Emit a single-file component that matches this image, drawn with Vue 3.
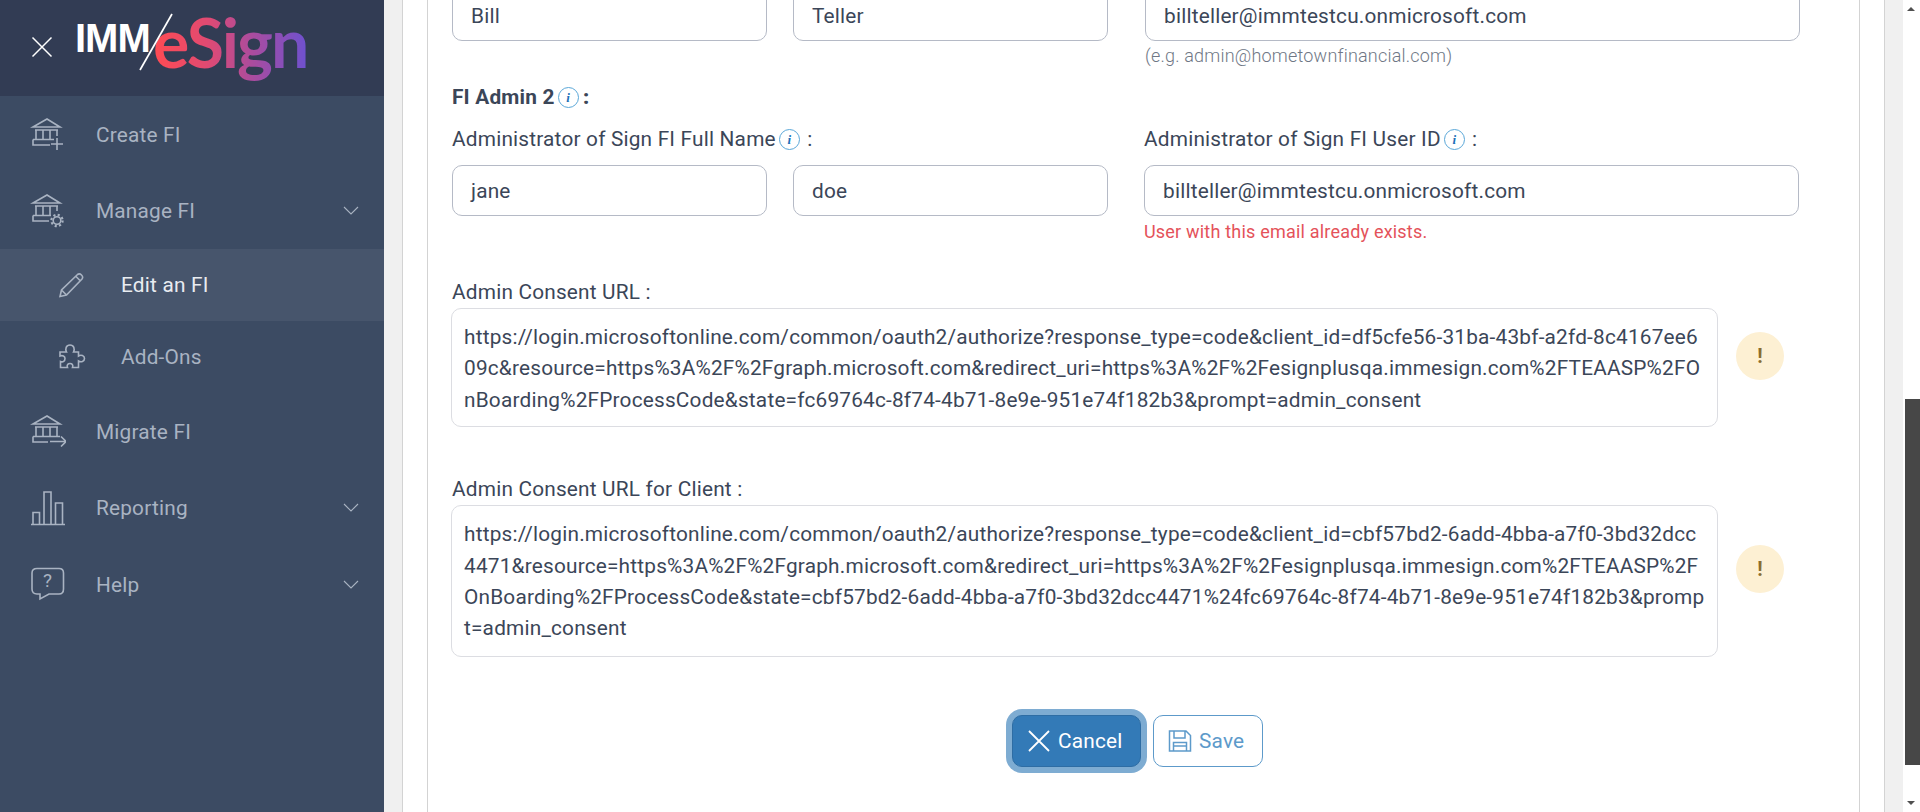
<script setup>
const menu = [
  { label: 'Create FI', icon: 'create', h: 77 },
  { label: 'Manage FI', icon: 'manage', arrow: true, h: 76 },
  { label: 'Edit an FI', icon: 'pencil', sub: true, active: true, h: 72 },
  { label: 'Add-Ons', icon: 'puzzle', sub: true, h: 72 },
  { label: 'Migrate FI', icon: 'migrate', h: 77 },
  { label: 'Reporting', icon: 'chart', arrow: true, h: 76 },
  { label: 'Help', icon: 'help', arrow: true, h: 77 },
]
const url1 = 'https://login.microsoftonline.com/common/oauth2/authorize?response_type=code&client_id=df5cfe56-31ba-43bf-a2fd-8c4167ee6 09c&resource=https%3A%2F%2Fgraph.microsoft.com&redirect_uri=https%3A%2F%2Fesignplusqa.immesign.com%2FTEAASP%2FO nBoarding%2FProcessCode&state=fc69764c-8f74-4b71-8e9e-951e74f182b3&prompt=admin_consent'.split(' ')
const url2 = 'https://login.microsoftonline.com/common/oauth2/authorize?response_type=code&client_id=cbf57bd2-6add-4bba-a7f0-3bd32dcc 4471&resource=https%3A%2F%2Fgraph.microsoft.com&redirect_uri=https%3A%2F%2Fesignplusqa.immesign.com%2FTEAASP%2F OnBoarding%2FProcessCode&state=cbf57bd2-6add-4bba-a7f0-3bd32dcc4471%24fc69764c-8f74-4b71-8e9e-951e74f182b3&promp t=admin_consent'.split(' ')
</script>

<template>
  <div class="page">
    <aside class="sidebar">
      <div class="brand">
        <svg class="close" viewBox="0 0 22 22" width="22" height="22">
          <path d="M1.5 1.5 L20.5 20.5 M20.5 1.5 L1.5 20.5" stroke="#fff" stroke-width="1.5" fill="none" />
        </svg>
        <div class="logo">
          <span class="imm">IMM</span>
          <span class="esign">eSign</span>
          <svg class="slash" viewBox="0 0 36 58" width="36" height="58">
            <path d="M34 1 L2 57" stroke="#fff" stroke-width="1.7" />
          </svg>
        </div>
      </div>
      <nav>
        <div v-for="item in menu" :key="item.label" class="item" :class="{ sub: item.sub, active: item.active }" :style="{ height: item.h + 'px' }">
          <span class="icon">
            <svg v-if="item.icon === 'create'" viewBox="0 0 36 36" width="36" height="36" class="ico">
              <path d="M3 10 L17 2 L30 10 Z M5 13 H28 M6 13 V22 M13 13 V22 M20 13 V22 M27 13 V19 M3 22.5 H24 M3 22.5 V28 H20" />
              <path d="M27 21 V33 M21 27 H33" />
            </svg>
            <svg v-else-if="item.icon === 'manage'" viewBox="0 0 36 36" width="36" height="36" class="ico">
              <path d="M3 10 L17 2 L30 10 Z M5 13 H28 M6 13 V22 M13 13 V22 M20 13 V22 M27 13 V18 M3 22.5 H21 M3 22.5 V28 H19" />
              <circle cx="27" cy="27.5" r="3.8" />
              <circle cx="27" cy="27.5" r="5.6" class="teeth" />
            </svg>
            <svg v-else-if="item.icon === 'pencil'" viewBox="0 0 26 26" width="26" height="26" class="ico">
              <path d="M2 24.5 L3.5 18 L19.5 2.5 Q21.5 1 23.5 3 Q25.5 5 24 7 L8.5 23 Z M3.5 18 L8.5 23 M18 4.5 L22.5 9" />
            </svg>
            <svg v-else-if="item.icon === 'puzzle'" viewBox="0 0 28 28" width="28" height="28" class="ico">
              <path d="M2 9 H8.5 C7 6 8 2 12 2 C16 2 17 6 15.5 9 H20.5 V13 C23 11.5 26.5 12.5 26.5 15.5 C26.5 18.5 23 19.5 20.5 18 V24.5 H14.5 C15.5 22 14 20.5 12 20.5 C10 20.5 8.5 22 9.5 24.5 H2.5 V18.5 C5 19.5 7 18 7 15.5 C7 13 4.5 12 2 13 Z" />
            </svg>
            <svg v-else-if="item.icon === 'migrate'" viewBox="0 0 36 34" width="36" height="34" class="ico">
              <path d="M3 9 L17 1 L30 9 Z M5 12 H28 M6 12 V21 M13 12 V21 M20 12 V21 M27 12 V21 M3 21.5 H30 M3 21.5 V27 H18" />
              <path d="M20 26.5 H36 M31 21.5 L36 26.5 L31 31.5" />
            </svg>
            <svg v-else-if="item.icon === 'chart'" viewBox="0 0 36 36" width="36" height="36" class="ico">
              <path d="M1 34.5 H35 M3 34 V22.5 H9.5 V34 M14 34 V2 H21 V34 M25.5 34 V13 H32.5 V34" />
            </svg>
            <svg v-else viewBox="0 0 36 36" width="36" height="36" class="ico">
              <path d="M7 1.5 H29 Q33.5 1.5 33.5 6 V22 Q33.5 27 29 27 H19 L10 32 V27 H7 Q2 27 2 22 V6 Q2 1.5 7 1.5 Z" />
              <text x="17.5" y="20" class="qmark">?</text>
            </svg>
          </span>
          <span class="label">{{ item.label }}</span>
          <svg v-if="item.arrow" class="chev" viewBox="0 0 16 9" width="16" height="9">
            <path d="M1 1 L8 8 L15 1" fill="none" stroke="#a9b3c2" stroke-width="1.1" />
          </svg>
        </div>
      </nav>
    </aside>

    <main class="main">
      <div class="card">
        <div class="panel">
          <div class="row first">
            <div class="names">
              <div class="field">Bill</div>
              <div class="field">Teller</div>
            </div>
            <div class="mail">
              <div class="field">billteller@immtestcu.onmicrosoft.com</div>
              <div class="hint">(e.g. admin@hometownfinancial.com)</div>
            </div>
          </div>

          <h4 class="admin">FI Admin 2<i class="info">i</i><b> :</b></h4>

          <div class="row">
            <div class="names-col">
              <div class="lbl">Administrator of Sign FI Full Name<i class="info">i</i><span> :</span></div>
              <div class="names">
                <div class="field">jane</div>
                <div class="field">doe</div>
              </div>
            </div>
            <div class="mail">
              <div class="lbl">Administrator of Sign FI User ID<i class="info">i</i><span> :</span></div>
              <div class="field">billteller@immtestcu.onmicrosoft.com</div>
              <div class="err">User with this email already exists.</div>
            </div>
          </div>

          <div class="lbl consent-lbl">Admin Consent URL :</div>
          <div class="consent">
            <div class="url"><div v-for="l in url1" :key="l">{{ l }}</div></div>
            <div class="warn w1">!</div>
          </div>

          <div class="lbl consent-lbl second">Admin Consent URL for Client :</div>
          <div class="consent">
            <div class="url four"><div v-for="l in url2" :key="l">{{ l }}</div></div>
            <div class="warn w2">!</div>
          </div>

          <div class="actions">
            <button class="btn cancel">
              <svg viewBox="0 0 24 24" width="24" height="24"><path d="M2 2 L22 22 M22 2 L2 22" stroke="#fff" stroke-width="1.8" fill="none" /></svg>
              Cancel
            </button>
            <button class="btn save">
              <svg viewBox="0 0 24 24" width="24" height="24" fill="none" stroke="#5d9aca" stroke-width="1.5">
                <path d="M1.5 2 H18 L22.5 6.5 V22 H1.5 Z M6 2 V9 H17 V2 M5.5 22 V13.5 H18.5 V22 M5.5 17 H18.5" />
              </svg>
              Save
            </button>
          </div>
        </div>
      </div>
    </main>

    <div class="scrollbar">
      <span class="arr up"></span>
      <div class="thumb"></div>
      <span class="arr down"></span>
    </div>
  </div>
</template>

<style>
html, body { margin: 0; height: 100%; overflow: hidden; }
</style>

<style scoped>
.page {
  display: flex;
  width: 1920px;
  height: 812px;
  overflow: hidden;
  background: #f0f0f0;
  font-family: Roboto, "Liberation Sans", sans-serif;
  color: #3b4658;
  font-size: 20.8px;
  letter-spacing: 0.2px;
}
.sidebar {
  width: 384px;
  flex: none;
  background: #3c4b63;
}
.brand {
  height: 96px;
  background: #323c54;
  display: flex;
  align-items: center;
  padding-left: 31px;
  box-sizing: border-box;
}
.close { margin-top: -2px; }
.logo {
  margin-left: 24px;
  height: 96px;
  position: relative;
  flex: 1;
}
.imm {
  position: absolute;
  left: -2px;
  top: 15px;
  color: #fff;
  font: 700 40px/46px "Liberation Sans", sans-serif;
  letter-spacing: -1px;
}
.slash { position: absolute; left: 61px; top: 13px; }
.esign {
  position: absolute;
  left: 76px;
  top: 2px;
  line-height: 80px;
  padding-bottom: 6px;
  font-family: Lato, Roboto, sans-serif;
  font-size: 68px;
  font-weight: 700;
  letter-spacing: -2px;
  background: linear-gradient(90deg, #ff4b52 0%, #e14a72 35%, #a94c9f 65%, #6e51cf 100%);
  -webkit-background-clip: text;
  background-clip: text;
  color: transparent;
}
.item {
  display: flex;
  align-items: center;
  position: relative;
  padding-left: 30px;
  color: #a9b3c2;
  font-size: 20.8px;
}
.item.sub { padding-left: 58px; }
.item.sub .icon { width: 63px; }
.item.active { background: #47556c; color: #e9ecf1; }
.icon {
  width: 66px;
  flex: none;
  display: flex;
  align-items: center;
}
.ico { fill: none; stroke: #a9b3c2; stroke-width: 1.6; }
.teeth { stroke-width: 2.2; stroke-dasharray: 2.1 2.3; }
.qmark { fill: #a9b3c2; stroke: none; font-size: 19px; text-anchor: middle; font-family: Roboto, sans-serif; }
.chev { position: absolute; right: 25px; top: 50%; margin-top: -5px; }
.main {
  width: 1519px;
  flex: none;
  padding: 0 18px;
  box-sizing: border-box;
}
.card {
  height: 812px;
  background: #fff;
  border-left: 1px solid #d3d3d3;
  border-right: 1px solid #d3d3d3;
  box-sizing: border-box;
  padding: 0 24px;
}
.panel {
  height: 812px;
  border-left: 1px solid #d3d3d3;
  border-right: 1px solid #d3d3d3;
  box-sizing: border-box;
  padding: 0 36px 0 24px;
  display: flow-root;
}
.row { display: flex; gap: 37px; }
.row.first { margin-top: -10px; }
.names { display: flex; gap: 26px; }
.names-col { width: 655px; flex: none; }
.names .field { width: 315px; flex: none; }
.field {
  height: 51px;
  line-height: 50px;
  border: 1px solid #b5bac6;
  border-radius: 10px;
  background: #fff;
  box-sizing: border-box;
  padding: 0 18px;
}
.mail { width: 655px; flex: none; }
.hint { font-size: 18px; color: #6f7785; font-weight: 300; margin-top: 4px; line-height: 22px; white-space: nowrap; }
.err { font-size: 18px; color: #e4525a; margin-top: 5px; line-height: 22px; white-space: nowrap; }
.admin {
  margin: 17px 0 0;
  font-size: 20.8px;
  font-weight: 700;
  line-height: 26px;
  color: #3b4658;
}
.admin .info { margin-left: 3px; }
.admin b { margin-left: -1px; }
.lbl { line-height: 26px; margin: 16px 0 13px; white-space: nowrap; }
.lbl span { margin-left: 2px; }
.info {
  display: inline-block;
  width: 21px;
  height: 21px;
  border: 1px solid #5aa7d8;
  border-radius: 50%;
  box-sizing: border-box;
  margin-left: 3px;
  vertical-align: 2px;
  font: italic 700 13px/19px "Liberation Serif", serif;
  letter-spacing: 0;
  text-align: center;
  color: #1d70b8;
}
.consent { display: flex; align-items: flex-start; }
.lbl.consent-lbl { margin: 36px 0 3px; }
.lbl.consent-lbl.second { margin-top: 49px; }
.url {
  width: 1267px;
  flex: none;
  box-sizing: border-box;
  border: 1px solid #dcdde2;
  border-radius: 10px;
  padding: 13px 12px 10px;
  line-height: 31.4px;
  white-space: nowrap;
  margin-left: -1px;
}
.url.four { padding-bottom: 11px; }
.warn {
  width: 48px;
  height: 48px;
  border-radius: 50%;
  background: #fdf0d3;
  color: #8a6d2f;
  font-weight: 700;
  font-size: 20px;
  text-align: center;
  line-height: 48px;
  margin-left: 18px;
  flex: none;
}
.w1 { margin-top: 24px; }
.w2 { margin-top: 40px; }
.actions {
  display: flex;
  justify-content: center;
  gap: 12px;
  margin-top: 58px;
}
.btn {
  height: 52px;
  display: flex;
  align-items: center;
  gap: 7px;
  border-radius: 10px;
  font: 400 20.8px Roboto, sans-serif;
  letter-spacing: 0.2px;
  box-sizing: border-box;
  padding: 0 14px;
  flex: none;
}
.cancel {
  background: #337ab7;
  border: 1px solid #2e6da4;
  color: #fff;
  width: 129px;
  box-shadow: 0 0 0 6px #7eacd2;
}
.save {
  background: #fff;
  border: 1px solid #5d9aca;
  color: #5d9aca;
  width: 110px;
}
.scrollbar {
  width: 17px;
  flex: none;
  background: #fff;
  position: relative;
}
.arr { width: 0; height: 0; border-left: 4px solid transparent; border-right: 4px solid transparent; position: absolute; left: 4px; }
.arr.up { border-bottom: 4px solid #505050; top: 7px; }
.arr.down { border-top: 4px solid #505050; bottom: 7px; }
.thumb { position: absolute; left: 2px; right: 0; top: 399px; height: 366px; background: #474747; }
</style>
